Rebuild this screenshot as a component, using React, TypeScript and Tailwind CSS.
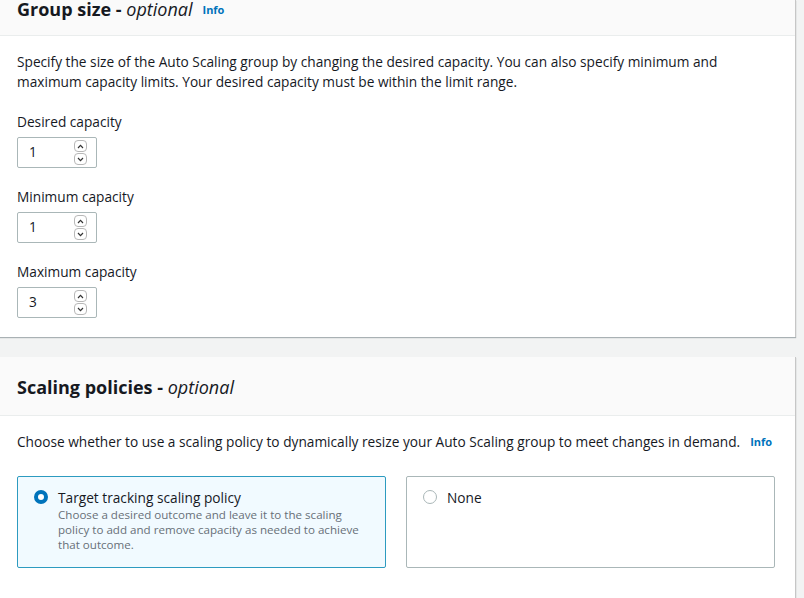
import React from "react";

function Spinner() {
  return (
    <div className="flex flex-col gap-[1px] mr-[9px]">
      <div className="w-[13px] h-[12px] rounded-[4px] border border-[#b8b8b8] flex items-center justify-center">
        <svg width="7" height="5" viewBox="0 0 7 5"><path d="M1 4 L3.5 1.3 L6 4" fill="none" stroke="#333" strokeWidth="1.2" /></svg>
      </div>
      <div className="w-[13px] h-[12px] rounded-[4px] border border-[#b8b8b8] flex items-center justify-center">
        <svg width="7" height="5" viewBox="0 0 7 5"><path d="M1 1 L3.5 3.7 L6 1" fill="none" stroke="#333" strokeWidth="1.2" /></svg>
      </div>
    </div>
  );
}

function NumField({ label, value }: { label: string; value: string }) {
  return (
    <div className="flex flex-col">
      <div className="text-[13.7px] leading-[20px] text-[#16191f] mb-[5px]">{label}</div>
      <div className="w-[80px] h-[31px] border border-[#aab7b8] rounded-[2px] flex items-center justify-between bg-white">
        <span className="pl-[11px] text-[13.7px] text-[#16191f]">{value}</span>
        <Spinner />
      </div>
    </div>
  );
}

export default function App() {
  return (
    <div
      className="w-[804px] h-[598px] overflow-hidden bg-[#f2f3f3]"
      style={{ fontFamily: '"Open Sans", "Noto Sans", sans-serif' }}
    >
      <div className="w-[796px] bg-white border-r border-[#c6c6c6] shadow-[0_1px_1px_0_rgba(0,28,36,0.3)]">
        <div className="h-[36px] bg-[#fafafa] border-b border-[#eaeded] flex items-start px-[17px]">
          <h2 className="text-[18px] font-bold text-[#16191f] leading-[22px] -mt-[2px]">
            Group size - <i className="font-normal">optional</i>
          </h2>
          <span className="ml-[10px] text-[11px] font-bold text-[#0073bb] leading-[14px] mt-[3px]">Info</span>
        </div>
        <div className="px-[17px] pt-[16px] pb-[19px] flex flex-col">
          <p className="text-[13.7px] leading-[20px] text-[#16191f] whitespace-nowrap">
            Specify the size of the Auto Scaling group by changing the desired capacity. You can also specify minimum and
            <br />
            maximum capacity limits. Your desired capacity must be within the limit range.
          </p>
          <div className="mt-[20px] flex flex-col gap-[19px]">
            <NumField label="Desired capacity" value="1" />
            <NumField label="Minimum capacity" value="1" />
            <NumField label="Maximum capacity" value="3" />
          </div>
        </div>
      </div>

      <div className="mt-[20px] w-[796px] bg-white border-r border-[#c6c6c6] shadow-[0_1px_1px_0_rgba(0,28,36,0.3)]">
        <div className="h-[59px] bg-[#fafafa] border-b border-[#eaeded] flex items-center px-[17px]">
          <h2 className="text-[18px] font-bold text-[#16191f] leading-[22px] mt-[1px]">
            Scaling policies - <i className="font-normal">optional</i>
          </h2>
        </div>
        <div className="px-[17px] pt-[16px] pb-[40px]">
          <p className="text-[13.7px] leading-[20px] text-[#16191f] flex items-center whitespace-nowrap">
            Choose whether to use a scaling policy to dynamically resize your Auto Scaling group to meet changes in demand.
            <span className="ml-[10px] text-[11px] font-bold text-[#0073bb]">Info</span>
          </p>
          <div className="mt-[24px] flex gap-[20px]">
            <div className="w-[369px] h-[92px] border border-[#2d9bc0] bg-[#f1faff] rounded-[2px] flex pl-[16px] pt-[12px]">
              <div className="w-[14px] h-[14px] rounded-full border-[4px] border-[#0073bb] bg-white mt-[1px] shrink-0" />
              <div className="ml-[10px] flex flex-col">
                <div className="text-[13.7px] leading-[17px] text-[#16191f]">Target tracking scaling policy</div>
                <div className="text-[11.6px] leading-[15px] text-[#687078] mt-[1px] whitespace-nowrap">
                  Choose a desired outcome and leave it to the scaling
                  <br />
                  policy to add and remove capacity as needed to achieve
                  <br />
                  that outcome.
                </div>
              </div>
            </div>
            <div className="w-[369px] h-[92px] border border-[#aab7b8] bg-white rounded-[2px] flex pl-[16px] pt-[12px]">
              <div className="w-[14px] h-[14px] rounded-full border border-[#aab7b8] bg-white mt-[1px] shrink-0" />
              <div className="ml-[10px] text-[13.7px] leading-[17px] text-[#16191f]">None</div>
            </div>
          </div>
        </div>
      </div>
    </div>
  );
}
